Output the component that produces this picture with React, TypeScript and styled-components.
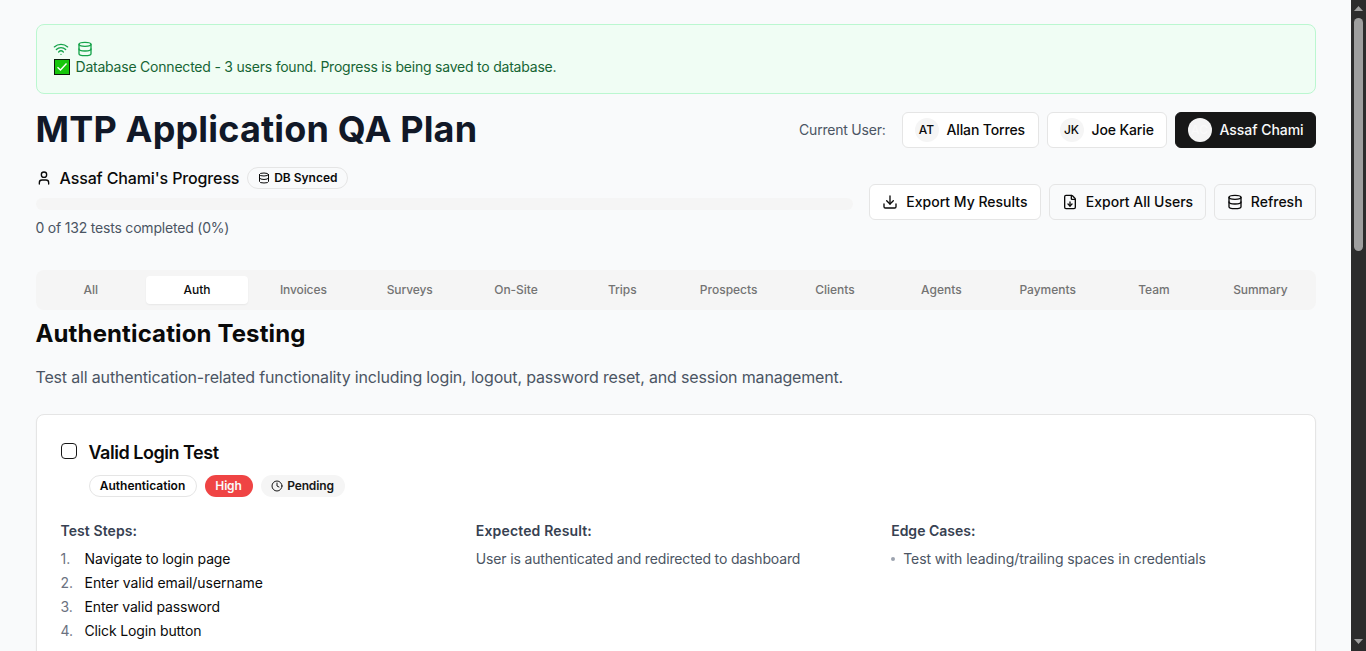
import React from "react";
import styled, { createGlobalStyle, css } from "styled-components";
import { Wifi, Database, User, Download, FileDown, Clock } from "lucide-react";

const GlobalStyle = createGlobalStyle`
  *, *::before, *::after { box-sizing: border-box; }
  html, body { margin: 0; padding: 0; height: 651px; overflow: hidden; }
  body {
    background: #f9fafb;
    color: #0a0a0a;
    font-family: Inter, "Liberation Sans", sans-serif;
    font-size: 14px;
    line-height: 20px;
  }
  h1, h2, h3, h4, p, ul, ol { margin: 0; padding: 0; list-style: none; }
  button { font-family: inherit; color: inherit; margin: 0; }
  svg { display: block; flex-shrink: 0; }
`;

const Text = styled.span<{ $ls?: number }>`
  white-space: nowrap;
  letter-spacing: ${(p) => p.$ls ?? 0}px;
`;

const Window = styled.div`
  display: flex;
  height: 651px;
  overflow: hidden;
`;

const Page = styled.main`
  flex: 1;
  min-width: 0;
  padding: 24px 35.5px 0;
  background: #f9fafb;
`;

const Alert = styled.section`
  height: 70px;
  padding: 16px;
  border: 1px solid #bbf7d0;
  border-radius: 8px;
  background: #f0fdf4;
  color: #166534;
`;

const AlertIcons = styled.div`
  display: flex;
  gap: 8px;
  color: #16a34a;
`;

const AlertMessage = styled.p`
  display: flex;
  align-items: center;
  gap: 6px;
  padding-left: 1px;
`;

const TitleRow = styled.header`
  display: flex;
  align-items: center;
  justify-content: space-between;
  height: 40px;
  margin-top: 16px;
`;

const Title = styled.h1`
  padding-bottom: 2px;
  font-size: 36px;
  line-height: 38px;
  font-weight: 700;
  color: #111827;
`;

const Users = styled.div`
  display: flex;
  align-items: center;
  gap: 8px;
`;

const UsersLabel = styled.span`
  margin-right: 8px;
  color: #4b5563;
`;

const Button = styled.button<{ $width: number; $tone?: "solid" | "plain" }>`
  display: flex;
  align-items: center;
  gap: 8px;
  width: ${(p) => p.$width}px;
  height: 36px;
  padding: 0 12px;
  border: 1px solid #e5e5e5;
  border-radius: 6px;
  background: #fff;
  font-size: 14px;
  line-height: 20px;
  font-weight: 500;
  ${(p) =>
    p.$tone === "solid" &&
    css`
      border-color: #171717;
      background: #171717;
      color: #fafafa;
    `}
  ${(p) =>
    p.$tone === "plain" &&
    css`
      background: transparent;
    `}
`;

const Avatar = styled.span`
  display: flex;
  flex-shrink: 0;
  align-items: center;
  justify-content: center;
  width: 24px;
  height: 24px;
  border-radius: 50%;
  background: #f5f5f5;
  font-size: 12px;
  line-height: 16px;
`;

const ProgressRow = styled.section`
  display: flex;
  align-items: center;
  gap: 16px;
  height: 72px;
  margin-top: 16px;
`;

const Progress = styled.div`
  display: flex;
  flex: 1;
  flex-direction: column;
  gap: 8px;
`;

const Owner = styled.div`
  display: flex;
  align-items: center;
  gap: 8px;
  height: 24px;
  font-size: 16px;
  font-weight: 500;
`;

const Track = styled.div`
  height: 12px;
  border-radius: 6px;
  background: #f5f5f5;
`;

const Muted = styled.p`
  color: #4b5563;
`;

const Actions = styled.div`
  display: flex;
  gap: 8px;
`;

const Badge = styled.span<{ $kind?: "danger" | "muted"; $width: number }>`
  display: inline-flex;
  align-items: center;
  justify-content: center;
  gap: 4px;
  width: ${(p) => p.$width}px;
  height: 22px;
  border: 1px solid #e5e5e5;
  border-radius: 11px;
  font-size: 12px;
  line-height: 16px;
  font-weight: 600;
  ${(p) =>
    p.$kind === "danger" &&
    css`
      border: 0;
      background: #ef4444;
      color: #fafafa;
    `}
  ${(p) =>
    p.$kind === "muted" &&
    css`
      border: 0;
      background: #f5f5f5;
      color: #171717;
    `}
`;

const Tabs = styled.nav`
  display: grid;
  grid-template-columns: repeat(12, 1fr);
  align-items: center;
  gap: 4px;
  height: 40px;
  margin-top: 32px;
  padding: 0 4px;
  border-radius: 8px;
  background: #f5f5f5;
`;

const Tab = styled.button<{ $active: boolean }>`
  height: 28px;
  padding: 6px 0;
  border: 0;
  border-radius: 4px;
  background: ${(p) => (p.$active ? "#fff" : "transparent")};
  box-shadow: ${(p) => (p.$active ? "0 1px 2px rgba(0, 0, 0, 0.06)" : "none")};
  color: ${(p) => (p.$active ? "#0a0a0a" : "#737373")};
  font-size: 12px;
  line-height: 16px;
  font-weight: 500;
`;

const SectionTitle = styled.h2`
  margin-top: 8px;
  font-size: 24px;
  line-height: 32px;
  font-weight: 700;
`;

const SectionText = styled.p`
  margin-top: 15px;
  padding-bottom: 1px;
  font-size: 16px;
  line-height: 24px;
  color: #4b5563;
`;

const Card = styled.article`
  height: 400px;
  margin-top: 24px;
  padding: 24px;
  border: 1px solid #e5e5e5;
  border-radius: 8px;
  background: #fff;
  box-shadow: 0 1px 2px rgba(0, 0, 0, 0.05);
`;

const CardHeader = styled.div`
  display: flex;
  gap: 12px;
`;

const Checkbox = styled.span`
  width: 16px;
  height: 16px;
  margin-top: 4px;
  border: 1px solid #171717;
  border-radius: 4px;
`;

const CardTitle = styled.h3`
  font-size: 18px;
  line-height: 28px;
  font-weight: 600;
`;

const Badges = styled.div`
  display: flex;
  gap: 8px;
  margin-top: 8px;
`;

const Columns = styled.div`
  display: grid;
  grid-template-columns: repeat(3, 1fr);
  gap: 16px;
  margin-top: 24px;
`;

const ColumnTitle = styled.h4`
  margin-bottom: 8px;
  font-size: 14px;
  line-height: 20px;
  font-weight: 600;
  color: #374151;
`;

const List = styled.ol`
  display: flex;
  flex-direction: column;
  gap: 4px;
`;

const Item = styled.li`
  display: flex;
`;

const Marker = styled.span`
  width: 24px;
  color: #6b7280;
`;

const Dot = styled.span`
  width: 4px;
  height: 4px;
  margin: 8px 8px 0 0;
  border-radius: 50%;
  background: #9ca3af;
`;

const Scrollbar = styled.aside`
  display: flex;
  flex-direction: column;
  align-items: center;
  justify-content: space-between;
  width: 15px;
  padding: 6px 0 7px;
  background: #2c2c2c;
`;

const Thumb = styled.div`
  width: 9px;
  height: 233px;
  margin: 7px 0 auto;
  border-radius: 5px;
  background: #9f9f9f;
`;

const tabs: [string, number][] = [
  ["All", 0],
  ["Auth", 0],
  ["Invoices", -0.1],
  ["Surveys", -0.1],
  ["On-Site", -0.05],
  ["Trips", 0],
  ["Prospects", 0],
  ["Clients", 0],
  ["Agents", 0],
  ["Payments", 0],
  ["Team", 0],
  ["Summary", -0.08],
];

const steps: [string, number][] = [
  ["Navigate to login page", -0.12],
  ["Enter valid email/username", -0.04],
  ["Enter valid password", -0.13],
  ["Click Login button", -0.14],
];

const CheckMark = () => (
  <svg width="16" height="16" viewBox="0 0 16 16">
    <rect x="0.5" y="0.5" width="15" height="15" fill="#16c60c" stroke="#0b1a0b" />
    <path d="M3.5 8.2 6.5 11 12.5 4.6" fill="none" stroke="#fff" strokeWidth="1.4" />
  </svg>
);

const Arrow = ({ down = false }: { down?: boolean }) => (
  <svg width="9" height="5" viewBox="0 0 9 5">
    <path d={down ? "M0 0H9L4.5 5Z" : "M0 5H9L4.5 0Z"} fill="#9f9f9f" />
  </svg>
);

export default function App() {
  return (
    <>
      <GlobalStyle />
      <Window>
        <Page>
          <Alert>
            <AlertIcons>
              <Wifi size={16} />
              <Database size={16} />
            </AlertIcons>
            <AlertMessage>
              <CheckMark />
              <Text $ls={-0.215}>Database Connected - 3 users found. Progress is being saved to database.</Text>
            </AlertMessage>
          </Alert>

          <TitleRow>
            <Title><Text $ls={0.17}>MTP Application QA Plan</Text></Title>
            <Users>
              <UsersLabel><Text $ls={-0.22}>Current User:</Text></UsersLabel>
              <Button $width={137}><Avatar>AT</Avatar><Text $ls={-0.13}>Allan Torres</Text></Button>
              <Button $width={120}><Avatar>JK</Avatar><Text $ls={-0.12}>Joe Karie</Text></Button>
              <Button $width={141} $tone="solid"><Avatar>AC</Avatar><Text $ls={-0.04}>Assaf Chami</Text></Button>
            </Users>
          </TitleRow>

          <ProgressRow>
            <Progress>
              <Owner>
                <User size={16} />
                <Text $ls={-0.13}>Assaf Chami's Progress</Text>
                <Badge $width={101}><Database size={12} /><Text>DB Synced</Text></Badge>
              </Owner>
              <Track />
              <Muted><Text $ls={-0.2}>0 of 132 tests completed (0%)</Text></Muted>
            </Progress>
            <Actions>
              <Button $width={171.5}><Download size={16} /><Text>Export My Results</Text></Button>
              <Button $width={157}$tone="plain"><FileDown size={16} /><Text>Export All Users</Text></Button>
              <Button $width={101.7} $tone="plain"><Database size={16} /><Text>Refresh</Text></Button>
            </Actions>
          </ProgressRow>

          <Tabs>
            {tabs.map(([name, ls]) => (
              <Tab key={name} $active={name === "Auth"}><Text $ls={ls}>{name}</Text></Tab>
            ))}
          </Tabs>

          <SectionTitle><Text $ls={0.12}>Authentication Testing</Text></SectionTitle>
          <SectionText>
            <Text $ls={-0.171}>Test all authentication-related functionality including login, logout, password reset, and session management.</Text>
          </SectionText>

          <Card>
            <CardHeader>
              <Checkbox />
              <div>
                <CardTitle><Text $ls={-0.47}>Valid Login Test</Text></CardTitle>
                <Badges>
                  <Badge $width={108}><Text>Authentication</Text></Badge>
                  <Badge $width={48} $kind="danger"><Text $ls={-0.15}>High</Text></Badge>
                  <Badge $width={84} $kind="muted"><Clock size={12} /><Text $ls={-0.15}>Pending</Text></Badge>
                </Badges>
              </div>
            </CardHeader>
            <Columns>
              <div>
                <ColumnTitle><Text $ls={0.08}>Test Steps:</Text></ColumnTitle>
                <List>
                  {steps.map(([step, ls], i) => (
                    <Item key={step}><Marker>{i + 1}.</Marker><Text $ls={ls}>{step}</Text></Item>
                  ))}
                </List>
              </div>
              <div>
                <ColumnTitle><Text $ls={0.15}>Expected Result:</Text></ColumnTitle>
                <Muted><Text $ls={-0.155}>User is authenticated and redirected to dashboard</Text></Muted>
              </div>
              <div>
                <ColumnTitle><Text>Edge Cases:</Text></ColumnTitle>
                <List as="ul">
                  <Item><Dot /><Muted as="span"><Text $ls={-0.06}>Test with leading/trailing spaces in credentials</Text></Muted></Item>
                </List>
              </div>
            </Columns>
          </Card>
        </Page>
        <Scrollbar>
          <Arrow />
          <Thumb />
          <Arrow down />
        </Scrollbar>
      </Window>
    </>
  );
}
